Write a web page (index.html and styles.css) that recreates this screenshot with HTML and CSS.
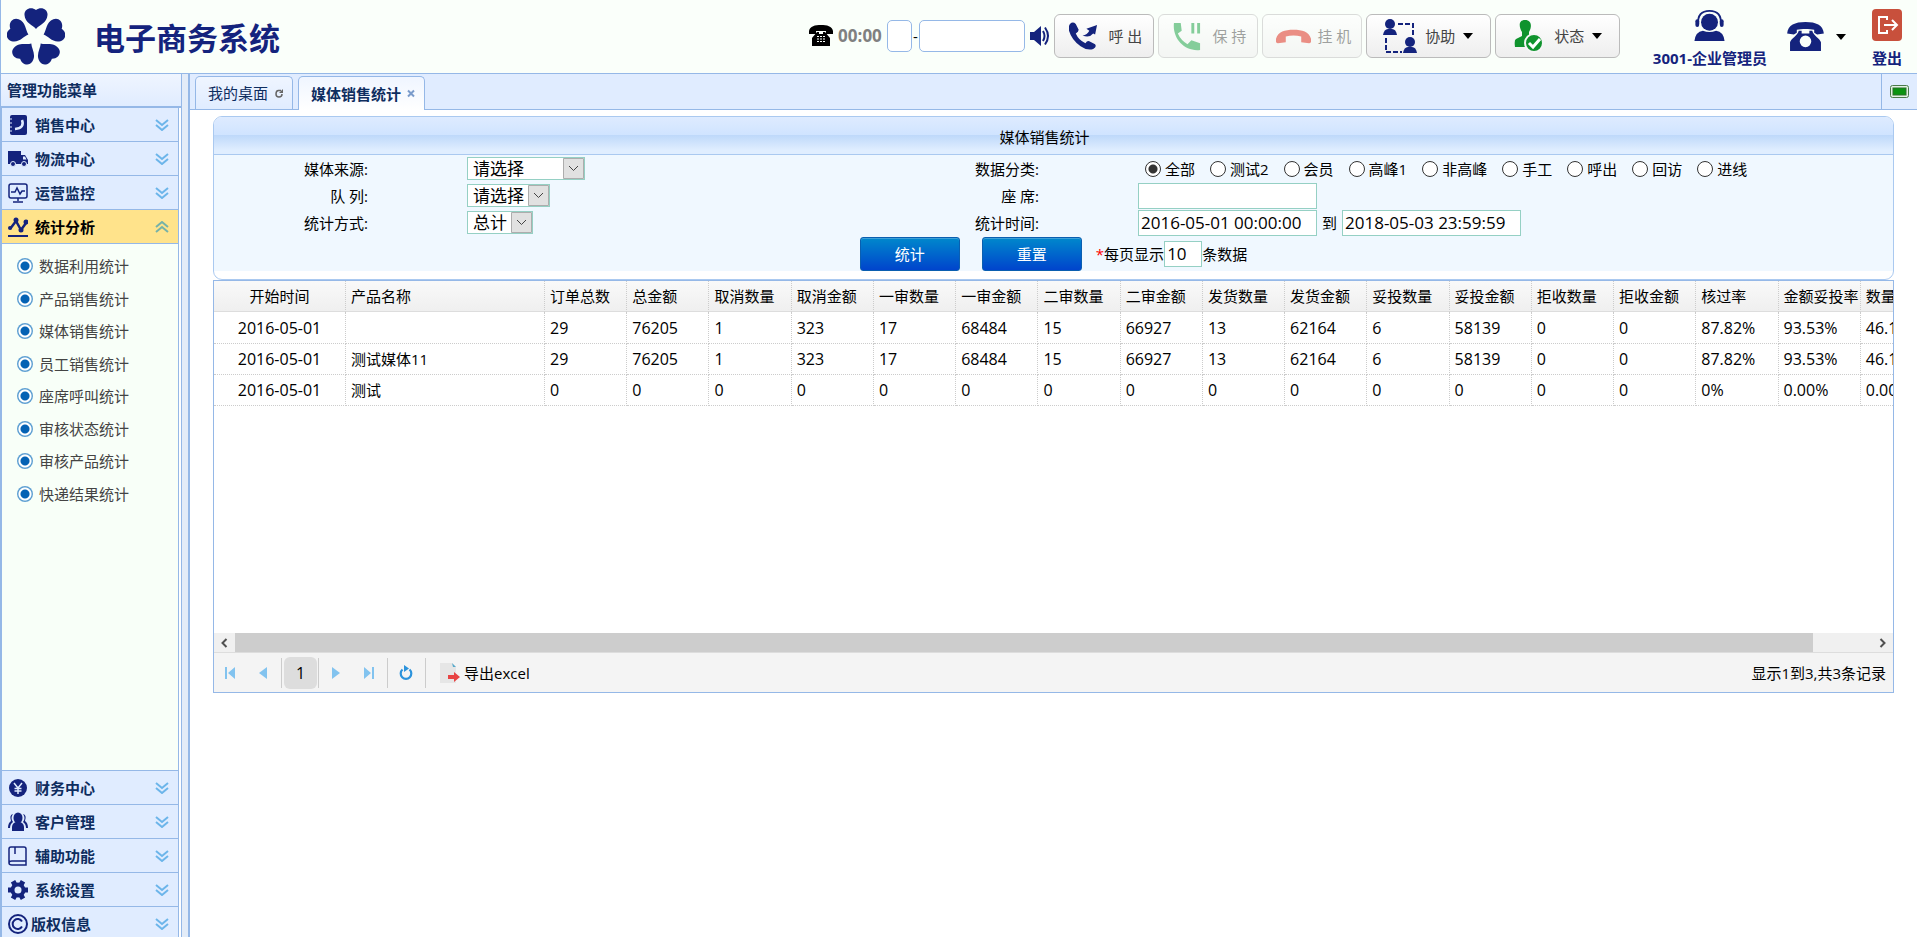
FILE: index.html
```html
<!DOCTYPE html>
<html lang="zh-CN">
<head>
<meta charset="utf-8">
<title>电子商务系统</title>
<link rel="stylesheet" href="styles.css">
</head>
<body>
<svg class="defs" aria-hidden="true">
  <symbol id="down" viewBox="0 0 14 12"><path d="M1 1l6 5 6-5M1 6l6 5 6-5" fill="none" stroke="currentColor" stroke-width="2"/></symbol>
  <symbol id="desk-phone" viewBox="0 0 38 30"><path d="M0 12C1 3 8 0 19 0s18 3 19 12l-7 1-3-2V8c-5-1-13-1-18 0v3l-3 2z"/><path fill-rule="evenodd" d="M12 9h3v3h8V9h3c1 5 8 8 9 12v9H3v-9c1-4 8-7 9-12zM19 14a6 6 0 1 0 0 12 6 6 0 0 0 0-12z"/></symbol>
</svg>
<div class="app">
  <header class="topbar">
    <svg class="logo" viewBox="-29 -29 58 58">
      <path id="petal" d="M0-8C-3-12-11-14-11.500-22C-12-28-5-31 0-27C5-31 12-28 11.500-22C11-14 3-12 0-8z"/>
      <use href="#petal" transform="rotate(72)"/><use href="#petal" transform="rotate(144)"/><use href="#petal" transform="rotate(216)"/><use href="#petal" transform="rotate(288)"/></svg>
    <h1 class="brand">电子商务系统</h1>
    <div class="dialer">
      <svg class="phone-sm" viewBox="0 0 24 21"><path d="M0 6C1 1 6 0 12 0s11 1 12 6v3h-7V6H7v3H0z"/><path fill-rule="evenodd" d="M8 7h2v2h4V7h2l5 6v8H3v-8zM8 11v1h2v-1zm3 0v1h2v-1zm3 0v1h2v-1zM8 13.500v1h2v-1zm3 0v1h2v-1zm3 0v1h2v-1zM8 16v1h2v-1zm3 0v1h2v-1zm3 0v1h2v-1z"/></svg>
      <span class="timer">00:00</span>
      <input class="num prefix" aria-label="区号"><span class="dash">-</span><input class="num number" aria-label="电话号码">
      <svg class="speaker" viewBox="0 0 20 20"><path d="M0 6h4l7-6v20l-7-6H0z"/><path d="M13 5q3 5 0 10M15 1.500q6 8.500 0 17" fill="none" stroke="currentColor" stroke-width="2"/></svg>
    </div>
    <div class="calls">
      <button class="call"><svg viewBox="0 0 30 30"><path d="M1 2Q4-1 7 2l3 6q0 2-3 4 3 7 10 10 2-3 4-2l6 3q2 3-2 5-6 2-13-3Q3 19 0 9q-1-4 1-7z"/><path d="M14 14q5-1 7-5l-3-2 11-4-2 10-2-1q-4 5-11 2z"/></svg>呼 出</button>
      <button class="call hold" disabled><svg viewBox="0 0 30 30"><path d="M1 1h7l1 8-4 3q3 7 10 11l4-4 9 3v7C12 31-1 17 1 1zM19 1h3v11h-3zM25 1h3v11h-3z"/></svg>保 持</button>
      <button class="call hang" disabled><svg viewBox="0 0 36 30"><path d="M0 17C2 10 9 8 18 8s16 2 18 9q1 5-2 5l-8-1v-6q-8-2-16 0v6l-8 1q-3 0-2-5z"/></svg>挂 机</button>
      <button class="call menu"><svg class="wide" viewBox="0 0 34 34"><g id="person"><circle cx="7" cy="5" r="5"/><path d="M0 16q1-6 5-6h4q4 0 5 6z"/></g><use href="#person" x="20" y="18"/><path d="M15 5h15v12M3 19v14h16" fill="none" stroke="currentColor" stroke-width="2" stroke-dasharray="5 2"/></svg>协助<i class="caret"></i></button>
      <button class="call menu state"><svg class="wide" viewBox="0 0 34 34"><path d="M13 1c7 0 7 7 4 12v4l8 4v7H3q-1-7 1-8l6-3v-4C7 8 6 1 13 1z"/><circle cx="22" cy="24" r="9" stroke="#f5f5f5" stroke-width="2"/><path d="M17 24l4 4 7-8" fill="none" stroke="#fff" stroke-width="3"/></svg>状态<i class="caret"></i></button>
    </div>
    <div class="user"><svg viewBox="0 0 32 34"><circle cx="16" cy="14" r="9"/><path d="M4 16Q3 2 16 2t12 14" fill="none" stroke="currentColor" stroke-width="2"/><rect x="1" y="11" width="4" height="8" rx="2"/><rect x="27" y="11" width="4" height="8" rx="2"/><path d="M0 34q1-10 9-11 7 3 14 0 8 1 9 11z"/></svg><span>3001-企业管理员</span></div>
    <button class="device" aria-label="话机"><svg><use href="#desk-phone"/></svg><i class="caret"></i></button>
    <a class="user logout" href="#"><svg viewBox="0 0 30 32"><rect width="30" height="32" rx="4" fill="#c8503c"/><path d="M15 11V8H7v16h8v-3M12 16h12M20 11l5 5-5 5" fill="none" stroke="#fff" stroke-width="2"/></svg><span>登出</span></a>
  </header>
  <div class="body">
    <aside class="sidebar">
      <h2 class="side-title">管理功能菜单</h2>
      <nav class="accordion">
        <button class="acc"><svg viewBox="0 0 20 20"><path fill-rule="evenodd" d="M4 0h13q2 0 2 2v16q0 2-2 2H4q-2 0-2-2V2q0-2 2-2z"/><path d="M14 5q3 8-7 9" fill="none" stroke="#e0ecff" stroke-width="2.500"/><path d="M0 4h4M0 8h4M0 12h4M0 16h4" stroke="#e0ecff"/></svg>销售中心<svg class="chev"><use href="#down"/></svg></button>
        <button class="acc"><svg viewBox="0 0 20 20"><path fill-rule="evenodd" d="M0 2h13v13H0zM13 6h4l3 5v4h-7zM15 7.500v3h3.500l-1.500-3z"/><circle cx="5" cy="15" r="2.500" stroke="#e0ecff"/><circle cx="16" cy="15" r="2.500" stroke="#e0ecff"/></svg>物流中心<svg class="chev"><use href="#down"/></svg></button>
        <button class="acc"><svg viewBox="0 0 20 20"><g fill="none" stroke="currentColor" stroke-width="1.500"><rect x="1" y="1" width="18" height="14" rx="2"/><path d="M3 9h4l2-4 3 6 2-3h3M10 15v3M5 19h10"/></g></svg>运营监控<svg class="chev"><use href="#down"/></svg></button>
        <button class="acc active"><svg viewBox="0 0 20 20"><path d="M2 12L8 4l5 9 5-7" fill="none" stroke="currentColor" stroke-width="2.500"/><circle cx="2" cy="11" r="2"/><circle cx="8" cy="3" r="2.500"/><circle cx="13" cy="13" r="2.500"/><circle cx="18" cy="5" r="2.500"/><path d="M0 18h20v2H0z"/></svg>统计分析<svg class="chev"><use href="#down"/></svg></button>
        <div class="acc-body">
          <ul class="links">
            <li><a href="#">数据利用统计</a></li><li><a href="#">产品销售统计</a></li><li><a href="#">媒体销售统计</a></li><li><a href="#">员工销售统计</a></li>
            <li><a href="#">座席呼叫统计</a></li><li><a href="#">审核状态统计</a></li><li><a href="#">审核产品统计</a></li><li><a href="#">快递结果统计</a></li>
          </ul>
        </div>
        <button class="acc"><svg viewBox="0 0 20 20"><circle cx="10" cy="10" r="9"/><path d="M6 5l4 5 4-5M10 10v6M6.500 10.500h7M6.500 13h7" stroke="#e0ecff" stroke-width="1.500" fill="none"/></svg>财务中心<svg class="chev"><use href="#down"/></svg></button>
        <button class="acc"><svg viewBox="0 0 20 20"><ellipse cx="10" cy="6" rx="4.500" ry="5.500"/><path d="M4 19q-1-8 4-9h4q5 1 4 9z"/><path d="M5 2Q1 3 3 9q-3 2-3 7h2q0-4 3-6-3-4 0-8zM15 2q4 1 2 7 3 2 3 7h-2q0-4-3-6 3-4 0-8z"/></svg>客户管理<svg class="chev"><use href="#down"/></svg></button>
        <button class="acc"><svg viewBox="0 0 20 20"><path d="M18 15H4q-3 0-3 2t3 2h14v-4M1 17V3q0-2 2-2h13q2 0 2 2v12M7 1v7" fill="none" stroke="currentColor" stroke-width="1.500"/></svg>辅助功能<svg class="chev"><use href="#down"/></svg></button>
        <button class="acc"><svg viewBox="0 0 20 20"><path d="M0 10h20M5 1.300l10 17.400M15 1.300L5 18.700" stroke="currentColor" stroke-width="5"/><circle cx="10" cy="10" r="7.500"/><circle cx="10" cy="10" r="3.500" fill="#e0ecff"/></svg>系统设置<svg class="chev"><use href="#down"/></svg></button>
        <button class="acc tight"><svg viewBox="0 0 20 20"><g fill="none" stroke="currentColor" stroke-width="2"><circle cx="10" cy="10" r="9"/><path d="M14 7.500a5 5 0 1 0 0 5"/></g></svg>版权信息<svg class="chev"><use href="#down"/></svg></button>
      </nav>
    </aside>
    <main class="main">
      <div class="tabs">
        <a class="tab" href="#">我的桌面<svg viewBox="0 0 8 9"><path d="M6 1.500H3.500Q1 1.500 1 5q0 3 3 3t3-3" fill="none" stroke="currentColor" stroke-width="1.500"/><path d="M4 4l4-4v4z"/></svg></a>
        <a class="tab current" href="#">媒体销售统计<svg viewBox="0 0 8 8"><path d="M1 1l6 6M7 1L1 7" stroke="currentColor" stroke-width="2"/></svg></a>
        <div class="tool"><svg viewBox="0 0 20 13"><rect x=".5" y=".5" width="18" height="12" rx="2" fill="#e4f2e4" stroke="#4a7a4a"/><rect x="3" y="3" width="13" height="7" fill="#0a9410" stroke="#2b6e2b"/></svg></div>
      </div>
      <div class="content">
        <form class="panel">
          <h3 class="panel-title">媒体销售统计</h3>
          <div class="fields">
            <label for="media">媒体来源:</label>
            <div><select id="media" class="sel-l"><option>请选择</option></select></div>
            <span class="label" id="cat">数据分类:</span>
            <div class="radios" role="radiogroup" aria-labelledby="cat">
              <label><input type="radio" name="c" checked>全部</label><label><input type="radio" name="c">测试2</label><label><input type="radio" name="c">会员</label><label><input type="radio" name="c">高峰1</label><label><input type="radio" name="c">非高峰</label><label><input type="radio" name="c">手工</label><label><input type="radio" name="c">呼出</label><label><input type="radio" name="c">回访</label><label><input type="radio" name="c">进线</label>
            </div>
            <label for="queue">队 列:</label>
            <div><select id="queue" class="sel-m"><option>请选择</option></select></div>
            <label for="seat">座 席:</label>
            <div><input id="seat" class="box"></div>
            <label for="mode">统计方式:</label>
            <div><select id="mode" class="sel-s"><option>总计</option></select></div>
            <label for="from">统计时间:</label>
            <div class="range"><input id="from" class="box" value="2016-05-01 00:00:00"><label for="to">到</label><input id="to" class="box" value="2018-05-03 23:59:59"></div>
          </div>
          <div class="actions">
            <button type="button" class="primary">统计</button>
            <button type="button" class="primary">重置</button>
            <div class="per"><b>*</b><label for="per">每页显示</label><input id="per" class="box mini" value="10">条数据</div>
          </div>
        </form>
        <section class="grid">
          <div class="view">
            <table>
              <colgroup><col class="c-date"><col class="c-name"><col span="17"></colgroup>
              <thead><tr><th>开始时间</th><th>产品名称</th><th>订单总数</th><th>总金额</th><th>取消数量</th><th>取消金额</th><th>一审数量</th><th>一审金额</th><th>二审数量</th><th>二审金额</th><th>发货数量</th><th>发货金额</th><th>妥投数量</th><th>妥投金额</th><th>拒收数量</th><th>拒收金额</th><th>核过率</th><th>金额妥投率</th><th>数量妥投率</th></tr></thead>
              <tbody>
                <tr><td>2016-05-01</td><td class="name"></td><td>29</td><td>76205</td><td>1</td><td>323</td><td>17</td><td>68484</td><td>15</td><td>66927</td><td>13</td><td>62164</td><td>6</td><td>58139</td><td>0</td><td>0</td><td>87.82%</td><td>93.53%</td><td>46.15%</td></tr>
                <tr><td>2016-05-01</td><td class="name">测试媒体11</td><td>29</td><td>76205</td><td>1</td><td>323</td><td>17</td><td>68484</td><td>15</td><td>66927</td><td>13</td><td>62164</td><td>6</td><td>58139</td><td>0</td><td>0</td><td>87.82%</td><td>93.53%</td><td>46.15%</td></tr>
                <tr><td>2016-05-01</td><td class="name">测试</td><td>0</td><td>0</td><td>0</td><td>0</td><td>0</td><td>0</td><td>0</td><td>0</td><td>0</td><td>0</td><td>0</td><td>0</td><td>0</td><td>0</td><td>0%</td><td>0.00%</td><td>0.00%</td></tr>
              </tbody>
            </table>
          </div>
          <div class="scroll"><svg viewBox="0 0 8 10"><path d="M6 1L2 5l4 4" fill="none" stroke="#505050" stroke-width="2"/></svg><div class="track"><div class="thumb"></div></div><svg viewBox="0 0 8 10"><path d="M2 1l4 4-4 4" fill="none" stroke="#505050" stroke-width="2"/></svg></div>
          <div class="pager">
            <button aria-label="首页"><svg viewBox="0 0 14 14"><path d="M2 1h2v12H2zM12 1v12L5 7z"/></svg></button>
            <button aria-label="上一页"><svg viewBox="0 0 14 14"><path d="M11 1v12L3 7z"/></svg></button>
            <i class="sep"></i><button class="page">1</button><i class="sep"></i>
            <button aria-label="下一页"><svg viewBox="0 0 14 14"><path d="M3 1v12l8-6z"/></svg></button>
            <button aria-label="末页"><svg viewBox="0 0 14 14"><path d="M2 1v12l7-6zM10 1h2v12h-2z"/></svg></button>
            <i class="sep"></i>
            <button class="refresh" aria-label="刷新"><svg viewBox="0 0 14 16"><path d="M10.500 4.500a5.300 5.300 0 1 1-7 0" fill="none" stroke="currentColor" stroke-width="2.200"/><path d="M5 0l5 3.500L5 7z"/></svg></button>
            <i class="sep"></i>
            <button class="export"><svg viewBox="0 0 20 20"><path d="M0 0h12l4 4v16H0z" fill="#e6e6e6"/><path d="M12 0l4 4h-3z" fill="#58aacb"/><path d="M8 12h6V9l6 5-6 5v-3H8z" fill="#e84444"/></svg>导出excel</button>
            <span class="info">显示1到3,共3条记录</span>
          </div>
        </section>
      </div>
    </main>
  </div>
</div>
</body>
</html>
```
FILE: styles.css
```css
* { box-sizing: border-box; }
body, h1, h2, h3, ul { margin: 0; padding: 0; }
body, button, input, select {
  font-family: "Open Sans", "Noto Sans CJK SC", sans-serif;
  font-size: 15px;
  line-height: 20px;
  color: #000;
}
body { background: #fff; overflow: hidden; }
button { border: 0; background: none; padding: 0; cursor: pointer; }
a { color: inherit; text-decoration: none; }
svg { fill: currentColor; flex: none; display: block; }
.defs { position: absolute; width: 0; height: 0; }
.app { display: flex; flex-direction: column; height: 100vh; }

/* top bar */
.topbar {
  display: flex; align-items: center; height: 74px; flex: none;
  padding: 0 15px 0 6px;
  background: #fafffa;
  border-left: 1px solid #95b8e7; border-bottom: 1px solid #95b8e7;
  color: #14237d;
}
.logo { width: 58px; height: 58px; }
.brand { font-size: 31px; line-height: 40px; margin-left: 29px; padding-top: 2px; white-space: nowrap; }
.dialer { display: flex; align-items: center; margin-left: auto; padding-bottom: 2px; }
.phone-sm { width: 24px; height: 21px; color: #000; }
.timer { font-size: 17px; font-weight: 700; color: #808080; margin: 0 5px; }
.dash { color: #000; width: 7px; text-align: center; }
.num { height: 32px; border: 1px solid #95b8e7; border-radius: 5px; background: #fff; }
.prefix { width: 25px; }
.number { width: 106px; }
.speaker { width: 20px; height: 20px; margin: 0 4px 0 5px; }
.calls { display: flex; gap: 4px; padding-bottom: 1px; }
.call {
  display: flex; align-items: center; justify-content: center; gap: 10px;
  width: 100px; height: 44px; padding-left: 4px;
  border: 1px solid #bbb; border-radius: 6px;
  background: linear-gradient(#fff, #eee);
  color: #444;
}
.call svg { width: 29px; height: 29px; color: #14237d; }
.call .wide { width: 34px; height: 34px; }
.call.hang svg { width: 35px; color: #dc1f10; }
.call.hang { gap: 6px; }
.call.hold svg { color: #119c3c; }
.call:disabled { opacity: .5; color: #444; }
.call.menu { width: 125px; gap: 8px; padding: 0; }
.call.state svg { color: #0f932d; }
.caret { border: 5px solid transparent; border-top: 6px solid #000; border-bottom: 0; }
.user {
  display: flex; flex-direction: column; align-items: center; gap: 7px;
  margin-left: 33px; padding-top: 3px; font-weight: 700; white-space: nowrap;
}
.user svg { width: 31px; height: 32px; }
.device { display: flex; align-items: center; gap: 12px; margin-left: 20px; color: #14237d; }
.device svg { width: 37px; height: 29px; }
.logout { margin-left: 26px; }
.logout svg { width: 30px; }

/* side menu */
.body { display: flex; flex: 1; min-height: 0; }
.sidebar {
  display: flex; flex-direction: column; width: 190px; flex: none; overflow: hidden;
  border-left: 1px solid #95b8e7; border-right: 2px solid #95b8e7;
  background: #e3ecf8;
}
.side-title {
  width: 181px; height: 33px; padding: 6px;
  font-size: 15px; line-height: 20px; color: #0e2d5f;
  background: linear-gradient(#eff5ff, #e0ecff);
  border-right: 1px solid #95b8e7; border-bottom: 1px solid #95b8e7;
}
.accordion {
  display: flex; flex-direction: column; flex: 1; width: 181px; margin-bottom: -4px;
  border: 1px solid #95b8e7; border-bottom: 0;
  padding-right: 3px; background: linear-gradient(90deg, #fff 176px, #95b8e7 176px, #95b8e7 177px, #fff 177px);
}
.acc {
  display: flex; align-items: center; gap: 7px; flex: none; height: 34px; padding: 0 9px 0 6px;
  font-weight: 700; color: #0e2d5f; text-align: left;
  background: #e0ecff; border-bottom: 1px solid #95b8e7;
}
.acc svg { width: 20px; height: 20px; color: #14237d; }
.acc .chev { width: 14px; height: 12px; margin-left: auto; color: #6cb5ea; }
.acc.active { color: #000; background: #ffe38b; }
.acc.active .chev { transform: rotate(180deg); color: #76b2a8; }
.acc.tight { gap: 3px; }
.acc-body { flex: 1; padding-top: 6px; background: #f8fff8; border-bottom: 1px solid #95b8e7; }
.links { display: flex; flex-direction: column; height: 260px; list-style: none; }
.links li { flex: 1; display: flex; align-items: center; padding-left: 15px; }
.links a { display: flex; align-items: center; gap: 6px; color: #444; }
.links a::before {
  content: ""; width: 16px; height: 16px; border-radius: 50%;
  background: radial-gradient(circle, #0462b4 4px, #fff 5px, #fff 6px, #5e9fd2 7px, #5e9fd2 8px);
}

/* tabs */
.main { display: flex; flex-direction: column; flex: 1; min-width: 0; }
.tabs {
  display: flex; align-items: flex-end; gap: 5px; height: 36px; padding-left: 5px;
  background: #e0ecff; border-bottom: 1px solid #95b8e7; color: #0e2d5f;
}
.tab {
  display: flex; align-items: center; gap: 7px; height: 33px; padding: 0 9px 0 12px;
  border: 1px solid #95b8e7; border-bottom: 0; border-radius: 5px 5px 0 0;
  background: linear-gradient(#eff5ff, #e0ecff);
}
.tab svg { width: 8px; height: 9px; color: #666; }
.tab.current { height: 34px; margin-bottom: -1px; gap: 6px; font-weight: 700; background: linear-gradient(#eff5ff, #fff); }
.tab.current svg { color: #7b9ccb; }
.tool { display: flex; align-items: center; justify-content: center; width: 36px; height: 35px; margin-left: auto; border-left: 1px solid #95b8e7; }
.tool svg { width: 20px; height: 13px; }
.content { padding: 6px 23px 0; }

/* query form */
.panel { border: 1px solid #aac9f0; border-radius: 9px; overflow: hidden; padding-bottom: 8px; }
.panel-title {
  height: 38px; padding: 10px 28px 10px 10px; text-align: center;
  font-size: 15px; font-weight: 400; line-height: 20px;
  background: linear-gradient(#deebff, #d0e4ff 48%, #bfd9fa 50%, #e0eeff 90%);
  border-bottom: 1px solid #aac9f0;
}
.fields {
  display: grid; grid-template-columns: 154px 319fr 154px 755fr; column-gap: 99px;
  grid-auto-rows: 27px; align-items: center; background: #f0f8ff;
}
.fields > label, .label { text-align: right; }
.fields > div, .range, .radios { display: flex; align-items: center; }
.fields select {
  appearance: none; height: 23px; padding: 0 0 0 5px;
  font-size: 17px; line-height: 21px; border: 1px solid #95d0c4; border-radius: 0;
  background: #fff right / 21px 100% no-repeat;
  background-image: url("data:image/svg+xml,%3Csvg xmlns='http://www.w3.org/2000/svg' viewBox='0 0 21 21'%3E%3Cpath d='M.5.5h20v20H.5z' fill='%23e1e1e1' stroke='%23adadad'/%3E%3Cpath d='M6 8l4.500 4.500L15 8' fill='none' stroke='%23444'/%3E%3C/svg%3E");
}
.sel-l { width: 118px; }
.sel-m { width: 83px; }
.sel-s { width: 66px; }
.radios { gap: 15px; padding-left: 7px; }
.radios label { display: flex; align-items: center; gap: 4px; white-space: nowrap; }
.radios input {
  appearance: none; width: 16px; height: 16px; margin: 0;
  border: 1px solid #333; border-radius: 50%; background: #fff;
}
.radios input:checked { background: radial-gradient(circle, #333 4px, #fff 5px); }
.box { width: 179px; height: 26px; padding: 0 2px; font-size: 17px; border: 1px solid #95d0c4; background: #fff; }
.range { gap: 5px; }
.actions { display: flex; align-items: center; justify-content: center; height: 35px; background: #f0f8ff; }
.primary {
  width: 100px; height: 34px; margin-right: 22px; color: #fff;
  border: 1px solid #0a5fb0; border-radius: 3px;
  background: linear-gradient(#0088cc, #0044cc);
  box-shadow: inset 0 1px 0 #3ca0d8;
}
.primary + .primary { margin-right: 14px; }
.per { display: flex; align-items: center; white-space: nowrap; }
.per b { color: #f00; font-weight: 400; }
.mini { width: 38px; }

/* result grid */
.grid { border: 1px solid #95b8e7; }
.view { min-height: 352px; overflow: hidden; }
table { table-layout: fixed; width: 1729px; border-collapse: separate; border-spacing: 0; }
.c-date { width: 132px; }
.c-name { width: 199px; }
th, td {
  height: 31px; padding: 0 5px; text-align: left; font-weight: 400; white-space: nowrap;
  border-right: 1px dotted #ccc; border-bottom: 1px dotted #ccc;
}
td { font-size: 16px; }
td.name { font-size: 15px; }
tbody tr:first-child td { height: 32px; }
th { background: linear-gradient(#f9f9f9, #efefef); border-bottom: 1px solid #ddd; }
th:first-child, td:first-child { text-align: center; }
.scroll { display: flex; align-items: center; height: 19px; background: #f0f0f0; }
.scroll svg { width: 21px; height: 10px; }
.track { flex: 1; height: 100%; }
.thumb { width: 96.4%; height: 100%; background: #cdcdcd; }
.pager {
  display: flex; align-items: center; height: 40px; padding: 0 7px 0 1px;
  background: #f4f4f4; border-top: 1px solid #ddd;
}
.pager button { display: flex; align-items: center; justify-content: center; width: 30px; height: 32px; margin-right: 3px; color: #82c3ef; }
.pager svg { width: 14px; height: 14px; }
.sep { width: 1px; height: 30px; background: #ccc; margin-right: 2px; }
.pager .page { width: 33px; margin-right: 1px; font-size: 16px; color: #000; background: #ddd; border-radius: 6px; }
.pager .refresh { color: #2c93dc; margin: 0 4px 0 1px; }
.pager .refresh svg { height: 16px; }
.pager .export { width: auto; gap: 4px; margin-left: 12px; color: #000; }
.pager .export svg { width: 20px; height: 20px; }
.info { margin-left: auto; }
```
